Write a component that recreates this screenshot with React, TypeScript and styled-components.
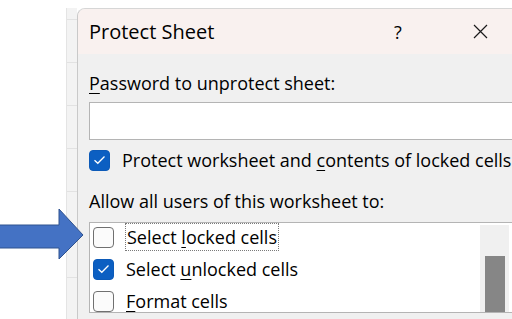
import React from 'react'
import styled, { createGlobalStyle } from 'styled-components'

const GlobalStyle = createGlobalStyle`
  html, body {
    margin: 0;
    padding: 0;
    background: #ffffff;
    overflow: hidden;
  }
`

const font = `"Open Sans", "Noto Sans", sans-serif`

const Page = styled.div`
  position: relative;
  width: 512px;
  height: 319px;
  display: flex;
  overflow: hidden;
  background: #ffffff;
  font-family: ${font};
  color: #000000;
`

const SheetMargin = styled.div`
  width: 66px;
  flex-shrink: 0;
`

const RowHeaders = styled.div`
  width: 10px;
  flex-shrink: 0;
  margin-top: 8px;
  background-color: #f3f3f3;
  border-left: 1px solid #e4e4e4;
  background-image: repeating-linear-gradient(
    to bottom,
    transparent 0px,
    transparent 11px,
    #e2e2e2 11px,
    #e2e2e2 12px,
    transparent 12px,
    transparent 43px
  );
`

const Dialog = styled.div`
  flex-shrink: 0;
  width: 436px;
  margin-top: 8px;
  border-top-left-radius: 8px;
  border-left: 1px solid #c9c9c9;
  border-top: 1px solid #d6d6d6;
  background: #f0f0f0;
  display: flex;
  flex-direction: column;
  overflow: hidden;
`

const TitleBar = styled.div`
  height: 45px;
  background: #f9f1ef;
  display: flex;
  align-items: center;
  padding-left: 11px;
`

const Title = styled.div`
  flex: 1;
  font-size: 20px;
  white-space: nowrap;
`

const TitleButton = styled.div<{ $gap?: number }>`
  width: 46px;
  height: 45px;
  margin-right: ${p => p.$gap ?? 0}px;
  display: flex;
  align-items: center;
  justify-content: center;
  font-size: 18px;
`

const Body = styled.div`
  padding-left: 11px;
  display: flex;
  flex-direction: column;
`

const Label = styled.div<{ $top: number }>`
  margin-top: ${p => p.$top}px;
  height: 22px;
  line-height: 22px;
  font-size: 18px;
  white-space: nowrap;
`

const Key = styled.span`
  text-decoration: underline;
  text-underline-offset: 3px;
  text-decoration-thickness: 1px;
`

const PasswordInput = styled.div`
  margin-top: 8px;
  height: 36px;
  margin-right: -1px;
  background: #ffffff;
  border: 1px solid #b4b4b4;
`

const CheckRow = styled.div<{ $top?: number }>`
  display: flex;
  align-items: center;
  margin-top: ${p => p.$top ?? 0}px;
  height: 22px;
  white-space: nowrap;
`

const Box = styled.div<{ $checked?: boolean }>`
  width: 21px;
  height: 21px;
  box-sizing: border-box;
  flex-shrink: 0;
  border-radius: 4px;
  border: 1px solid ${p => (p.$checked ? '#0c5ab8' : '#707070')};
  background: ${p => (p.$checked ? '#0c5fc2' : '#fbfbfb')};
  display: flex;
  align-items: center;
  justify-content: center;
`

const CheckText = styled.span<{ $focus?: boolean }>`
  font-size: 18px;
  margin-left: ${p => (p.$focus ? 11 : 12)}px;
  padding: ${p => (p.$focus ? '2px 1px' : '0')};
  border: ${p => (p.$focus ? '1px dotted #7a7a7a' : 'none')};
  line-height: 22px;
`

const ListBox = styled.div`
  margin-top: 10px;
  flex: 1;
  height: 120px;
  background: #ffffff;
  border: 1px solid #b4b4b4;
  border-right: none;
  display: flex;
`

const ListRows = styled.div`
  flex: 1;
  padding: 3px 0 0 3px;
  display: flex;
  flex-direction: column;
  gap: 10px;
`

const ScrollGutter = styled.div`
  width: 29px;
  margin: 2px 5px 0 0;
  background: #f0f0f0;
  display: flex;
  justify-content: center;
`

const ScrollThumb = styled.div`
  width: 20px;
  margin-top: 31px;
  background: #868686;
`

const Arrow = styled.svg`
  position: absolute;
  left: 0;
  top: 205px;
`

const Tick = () => (
  <svg width="13" height="10" viewBox="0 0 13 10">
    <path d="M1.5 5.2 L4.8 8.3 L11.5 1.5" fill="none" stroke="#ffffff" strokeWidth="1.3" />
  </svg>
)

const Check: React.FC<{ checked?: boolean; focus?: boolean; top?: number; children: React.ReactNode }> = ({ checked, focus, top, children }) => (
  <CheckRow $top={top}>
    <Box $checked={checked}>{checked && <Tick />}</Box>
    <CheckText $focus={focus}>{children}</CheckText>
  </CheckRow>
)

const App: React.FC = () => {
  return (
    <>
      <GlobalStyle />
      <Page>
        <SheetMargin />
        <RowHeaders />
        <Dialog>
          <TitleBar>
            <Title>Protect Sheet</Title>
            <TitleButton $gap={36}>?</TitleButton>
            <TitleButton $gap={11}>
              <svg width="15" height="15" viewBox="0 0 15 15">
                <path d="M1 1 L14 14 M14 1 L1 14" stroke="#1a1a1a" strokeWidth="1.2" />
              </svg>
            </TitleButton>
          </TitleBar>
          <Body>
            <Label $top={18}>
              <Key>P</Key>assword to unprotect sheet:
            </Label>
            <PasswordInput />
            <Check checked top={9}>
              Protect worksheet and <Key>c</Key>ontents of locked cells
            </Check>
            <Label $top={19}>Allow all users of this worksheet to:</Label>
            <ListBox>
              <ListRows>
                <Check focus>
                  Select <Key>l</Key>ocked cells
                </Check>
                <Check checked>
                  Select <Key>u</Key>nlocked cells
                </Check>
                <Check>
                  <Key>F</Key>ormat cells
                </Check>
              </ListRows>
              <ScrollGutter>
                <ScrollThumb />
              </ScrollGutter>
            </ListBox>
          </Body>
        </Dialog>
        <Arrow width="86" height="58" viewBox="0 205 86 58">
          <polygon
            points="-2,225 59,225 59,209 83,235 59,259 59,248 -2,248"
            fill="#4472c4"
            stroke="#2f528f"
            strokeWidth="1"
          />
        </Arrow>
      </Page>
    </>
  )
}

export default App
